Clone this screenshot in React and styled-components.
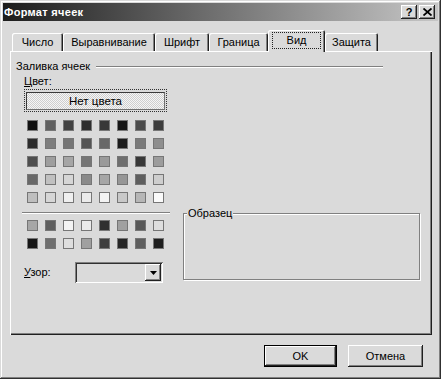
import React from 'react';
import styled, { createGlobalStyle } from 'styled-components';

const BG = '#dadada';

const Global = createGlobalStyle`
  html, body { margin: 0; padding: 0; background: ${BG}; }
  body { font-family: "Liberation Sans", Arial, sans-serif; font-size: 11px; line-height: 13px; color: #000; }
  * { box-sizing: border-box; }
`;

const raised = `
  box-shadow: inset -1px -1px 0 #202020, inset 1px 1px 0 #fff, inset -2px -2px 0 #808080, inset 2px 2px 0 ${BG};
`;
const sunken = `
  box-shadow: inset 1px 1px 0 #808080, inset -1px -1px 0 #fff, inset 2px 2px 0 #303030, inset -2px -2px 0 ${BG};
`;

const Window = styled.div`
  width: 441px;
  height: 379px;
  background: ${BG};
  padding: 3px;
  display: flex;
  flex-direction: column;
  box-shadow: inset -1px -1px 0 #303030, inset 1px 1px 0 ${BG}, inset -2px -2px 0 #808080, inset 2px 2px 0 #fff;
`;

const TitleBar = styled.div`
  height: 18px;
  display: flex;
  align-items: center;
  padding: 0 3px 0 1px;
  background: linear-gradient(90deg, #1c1c1c 0%, #6a6a6a 45%, #c6c6c6 100%);
`;

const TitleText = styled.span`
  flex: 1;
  color: #fff;
  font-weight: bold;
  font-size: 11px;
  letter-spacing: 0.3px;
`;

const CaptionButton = styled.div`
  width: 16px;
  height: 14px;
  margin-left: ${p => p.$gap || 0}px;
  background: ${BG};
  display: flex;
  align-items: center;
  justify-content: center;
  font-weight: bold;
  font-size: 11px;
  line-height: 12px;
  ${raised}
`;

const Body = styled.div`
  flex: 1;
  display: flex;
  flex-direction: column;
  padding: 9px 6px 0 7px;
`;

const TabRow = styled.div`
  height: 21px;
  display: flex;
  align-items: flex-end;
  padding-left: 2px;
  position: relative;
  z-index: 1;
`;

const Tab = styled.div`
  width: ${p => p.$w}px;
  height: ${p => (p.$active ? 22 : 18)}px;
  margin-bottom: ${p => (p.$active ? -1 : 0)}px;
  background: ${BG};
  border-radius: 2px 2px 0 0;
  display: flex;
  align-items: ${p => (p.$active ? 'flex-start' : 'center')};
  justify-content: center;
  padding-top: ${p => (p.$active ? 2 : 1)}px;
  box-shadow: inset 1px 1px 0 #fff, inset -1px 0 0 #202020, inset -2px 0 0 #808080;
`;

const FocusLabel = styled.span`
  width: calc(100% - 8px);
  height: 17px;
  display: flex;
  align-items: center;
  justify-content: center;
  border: 1px dotted #202020;
`;

const Panel = styled.div`
  width: 422px;
  height: 284px;
  padding: 1px 0 0 6px;
  display: flex;
  flex-direction: column;
  box-shadow: inset 1px 1px 0 #fff, inset -1px -1px 0 #202020, inset -2px -2px 0 #808080;
`;

const GroupHeader = styled.div`
  width: 367px;
  margin-top: 8px;
  display: flex;
  align-items: center;
  gap: 6px;
`;

const EtchedLine = styled.div`
  flex: ${p => (p.$grow ? 1 : 'none')};
  width: ${p => (p.$w ? `${p.$w}px` : 'auto')};
  height: 2px;
  border-top: 1px solid #808080;
  border-bottom: 1px solid #fff;
  margin-top: ${p => p.$mt || 0}px;
`;

const Columns = styled.div`
  display: flex;
  margin-left: 6px;
  margin-top: 2px;
`;

const LeftColumn = styled.div`
  width: 148px;
  display: flex;
  flex-direction: column;
`;

const RightColumn = styled.div`
  margin-left: 13px;
  padding-top: 138px;
`;

const FieldLabel = styled.span`
  margin-left: 2px;
  width: ${p => (p.$w ? `${p.$w}px` : 'auto')};
  & u { text-decoration: underline; text-underline-offset: 1px; }
`;

const FocusFrame = styled.div`
  margin: 1px 0 0 2px;
  width: 143px;
  height: 23px;
  border: 1px dotted #303030;
  padding: 2px 1px 1px 1px;
`;

const NoColorButton = styled.div`
  width: 100%;
  height: 100%;
  display: flex;
  align-items: center;
  justify-content: center;
  font-size: 11.5px;
  border: 1px solid #3a3a3a;
  border-right-color: #707070;
  border-bottom-color: #707070;
  background: repeating-conic-gradient(#f6f6f6 0 25%, #cfcfcf 0 50%) 0 0 / 2px 2px;
`;

const SwatchGrid = styled.div`
  display: grid;
  grid-template-columns: repeat(8, 11px);
  grid-auto-rows: 11px;
  gap: 7px;
  margin: ${p => p.$mt}px 0 0 5px;
`;

const Swatch = styled.div`
  width: 11px;
  height: 11px;
  border: 1px solid #767676;
`;

const PatternRow = styled.div`
  margin-top: 13px;
  height: 21px;
  display: flex;
  align-items: center;
`;

const Combo = styled.div`
  width: 88px;
  height: 21px;
  padding: 2px;
  display: flex;
  justify-content: flex-end;
  background: ${BG};
  ${sunken}
`;

const ComboButton = styled.div`
  width: 16px;
  height: 17px;
  display: flex;
  align-items: center;
  justify-content: center;
  ${raised}
`;

const SampleBox = styled.div`
  position: relative;
  width: 237px;
  height: 67px;
  border: 1px solid #808080;
  box-shadow: inset 1px 1px 0 #fff, 1px 1px 0 #fff;
`;

const SampleLegend = styled.span`
  position: absolute;
  top: -7px;
  left: 3px;
  padding: 0 1px;
  background: ${BG};
`;

const ButtonRow = styled.div`
  margin-top: 10px;
  display: flex;
  justify-content: flex-end;
  gap: 11px;
  padding-right: 9px;
`;

const DialogButton = styled.div`
  width: ${p => p.$w}px;
  height: 22px;
  display: flex;
  align-items: center;
  justify-content: center;
  font-size: 11px;
  background: ${BG};
  border: ${p => (p.$default ? '1px solid #000' : 'none')};
  box-shadow: ${p =>
    p.$default
      ? `inset -1px -1px 0 #202020, inset 1px 1px 0 #fff, inset -2px -2px 0 #808080`
      : `inset -1px -1px 0 #202020, inset 1px 1px 0 #fff, inset -2px -2px 0 #808080, inset 2px 2px 0 ${BG}`};
`;

const tabs = [
  { label: 'Число', w: 51 },
  { label: 'Выравнивание', w: 92 },
  { label: 'Шрифт', w: 54 },
  { label: 'Граница', w: 59 },
  { label: 'Вид', w: 57, active: true },
  { label: 'Защита', w: 53 },
];

const mainColors = [
  ['#111111', '#606060', '#424242', '#2e2e2e', '#383838', '#161616', '#4a4a4a', '#3c3c3c'],
  ['#2c2c2c', '#7e7e7e', '#767676', '#545454', '#686868', '#1c1c1c', '#7a7a7a', '#8e8e8e'],
  ['#4e4e4e', '#9e9e9e', '#a6a6a6', '#767676', '#9a9a9a', '#6e6e6e', '#383838', '#9c9c9c'],
  ['#686868', '#c0c0c0', '#d6d6d6', '#8a8a8a', '#a6a6a6', '#969696', '#5e5e5e', '#cecece'],
  ['#bebebe', '#d6d6d6', '#efefef', '#ebebeb', '#f3f3f3', '#c8c8c8', '#b6b6b6', '#fafafa'],
];

const extraColors = [
  ['#a6a6a6', '#5e5e5e', '#f3f3f3', '#ebebeb', '#303030', '#a0a0a0', '#585858', '#dedede'],
  ['#161616', '#6e6e6e', '#dedede', '#a0a0a0', '#3e3e3e', '#262626', '#5e5e5e', '#1e1e1e'],
];

const CloseIcon = () => (
  <svg width="9" height="8" viewBox="0 0 9 8">
    <path d="M0.5 0.5 L8.5 7.5 M8.5 0.5 L0.5 7.5" stroke="#000" strokeWidth="1.8" fill="none" />
  </svg>
);

const ArrowIcon = () => (
  <svg width="7" height="4" viewBox="0 0 7 4">
    <path d="M0 0 H7 L3.5 4 Z" fill="#000" />
  </svg>
);

export default function App() {
  return (
    <>
      <Global />
      <Window>
        <TitleBar>
          <TitleText>Формат ячеек</TitleText>
          <CaptionButton>?</CaptionButton>
          <CaptionButton $gap={2}>
            <CloseIcon />
          </CaptionButton>
        </TitleBar>
        <Body>
          <TabRow>
            {tabs.map(t => (
              <Tab key={t.label} $w={t.w} $active={t.active}>
                {t.active ? <FocusLabel>{t.label}</FocusLabel> : t.label}
              </Tab>
            ))}
          </TabRow>
          <Panel>
            <GroupHeader>
              <span>Заливка ячеек</span>
              <EtchedLine $grow />
            </GroupHeader>
            <Columns>
              <LeftColumn>
                <FieldLabel>
                  <u>Ц</u>вет:
                </FieldLabel>
                <FocusFrame>
                  <NoColorButton>Нет цвета</NoColorButton>
                </FocusFrame>
                <SwatchGrid $mt={8}>
                  {mainColors.flat().map((c, i) => (
                    <Swatch key={i} style={{ background: c }} />
                  ))}
                </SwatchGrid>
                <EtchedLine $w={148} $mt={9} />
                <SwatchGrid $mt={6}>
                  {extraColors.flat().map((c, i) => (
                    <Swatch key={i} style={{ background: c }} />
                  ))}
                </SwatchGrid>
                <PatternRow>
                  <FieldLabel $w={51}>
                    <u>У</u>зор:
                  </FieldLabel>
                  <Combo>
                    <ComboButton>
                      <ArrowIcon />
                    </ComboButton>
                  </Combo>
                </PatternRow>
              </LeftColumn>
              <RightColumn>
                <SampleBox>
                  <SampleLegend>Образец</SampleLegend>
                </SampleBox>
              </RightColumn>
            </Columns>
          </Panel>
          <ButtonRow>
            <DialogButton $w={73} $default>
              OK
            </DialogButton>
            <DialogButton $w={75}>Отмена</DialogButton>
          </ButtonRow>
        </Body>
      </Window>
    </>
  );
}
